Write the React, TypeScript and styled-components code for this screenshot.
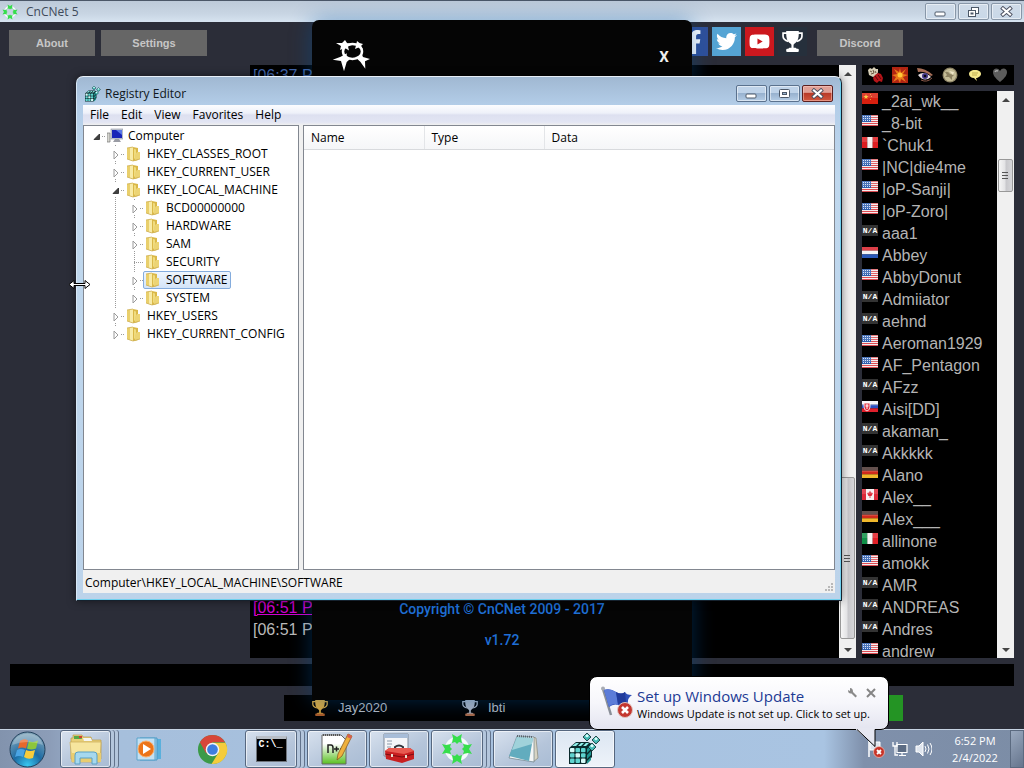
import React from "react";
import styled, { createGlobalStyle, css } from "styled-components";
import { FaFacebookF, FaTwitter, FaYoutube } from "react-icons/fa";

const segoe = `"Open Sans", "Noto Sans", sans-serif`;
const arial = `"Liberation Sans", Arial, sans-serif`;

const GlobalStyle = createGlobalStyle`
  *, *::before, *::after { box-sizing: border-box; }
  html, body { margin: 0; height: 100%; overflow: hidden; background: #2b2d38; }
  #root { height: 100%; }
  button, input { font: inherit; color: inherit; margin: 0; padding: 0; border: 0; border-radius: 0; background: none; }
  ul, h1, h2, p { margin: 0; padding: 0; list-style: none; }
  h1, h2 { font-weight: normal; }
  svg { display: block; flex: none; }
`;

const Desktop = styled.div`
  position: relative;
  height: 100%;
  display: flex;
  flex-direction: column;
  overflow: hidden;
  font: 12px/18px ${segoe};
  color: #000;
`;

/* ---------- shared window parts ---------- */

const Controls = styled.div`
  display: flex;
  gap: 2px;
  margin-left: auto;
`;

const ControlButton = styled.button<{ $tone?: "close" | "idle" }>`
  width: 31px;
  height: 17px;
  display: flex;
  align-items: center;
  justify-content: center;
  border: 1px solid #5b728e;
  border-radius: 2px;
  box-shadow: inset 0 0 0 1px rgba(255, 255, 255, 0.5);
  background: linear-gradient(#bfd3e9 0 45%, #98b2cf 50%, #b5cde6);
  ${(p) =>
    p.$tone === "close" &&
    css`
      border-color: #5a2020;
      background: linear-gradient(#e0a096 0 42%, #b93a28 50%, #d2583f);
      box-shadow: inset 0 0 0 1px rgba(255, 210, 200, 0.5);
    `}
  ${(p) =>
    p.$tone === "idle" &&
    css`
      border-color: #8897a8;
      background: linear-gradient(#cfdbe8, #c9d8e8);
    `}
`;

const MinGlyph = () => (
  <svg width="13" height="11" viewBox="0 0 13 11">
    <rect x="1" y="6" width="10" height="4" rx="1" fill="#fff" stroke="#4c5868" />
  </svg>
);
const MaxGlyph = () => (
  <svg width="13" height="11" viewBox="0 0 13 11">
    <rect x="1.5" y="1.5" width="10" height="8" rx="1" fill="#fff" stroke="#4c5868" />
    <rect x="4.5" y="4.5" width="4" height="2" fill="#9ab4d0" stroke="#4c5868" />
  </svg>
);
const RestoreGlyph = () => (
  <svg width="13" height="12" viewBox="0 0 13 12">
    <rect x="4.500" y="1.500" width="7" height="6" fill="#fff" stroke="#4c5868" />
    <rect x="1.500" y="4.500" width="7" height="6" fill="#fff" stroke="#4c5868" />
    <rect x="4" y="7" width="2" height="1" fill="#c9d8e8" stroke="#4c5868" />
  </svg>
);
const CloseGlyph = () => (
  <svg width="13" height="11" viewBox="0 0 13 11">
    <path d="M3 2.500 10 8.500M10 2.500 3 8.500" stroke="#4c5060" strokeWidth="4" strokeLinecap="square" />
    <path d="M3 2.500 10 8.500M10 2.500 3 8.500" stroke="#fff" strokeWidth="2.200" strokeLinecap="square" />
  </svg>
);

/* ---------- scroll bars ---------- */

const ScrollColumn = styled.div`
  width: 17px;
  flex: none;
  display: flex;
  flex-direction: column;
  align-items: center;
  background: #f0f0f0;
`;
const ScrollArrow = styled.button`
  width: 17px;
  height: 17px;
  display: flex;
  align-items: center;
  justify-content: center;
`;
const ScrollSpace = styled.div<{ $grow: number }>`
  flex: ${(p) => p.$grow} 0 0;
`;
const ScrollThumb = styled.div<{ $size: number }>`
  width: 15px;
  height: ${(p) => p.$size}px;
  border: 1px solid #989898;
  border-radius: 2px;
  background: linear-gradient(90deg, #f6f6f6, #e3e3e5 45%, #c8c8cc 55%, #d6d6d9);
  display: flex;
  align-items: center;
  justify-content: center;
`;

function ScrollBar({ before, after, size }: { before: number; after: number; size: number }) {
  return (
    <ScrollColumn>
      <ScrollArrow aria-label="Scroll up">
        <svg width="8" height="4" viewBox="0 0 8 4"><path d="M0 4 4 0l4 4z" fill="#444" /></svg>
      </ScrollArrow>
      <ScrollSpace $grow={before} />
      <ScrollThumb $size={size}>
        <svg width="7" height="9" viewBox="0 0 7 9"><path d="M0 1.500h6M0 4.500h6M0 7.500h6" stroke="#555" /></svg>
      </ScrollThumb>
      <ScrollSpace $grow={after} />
      <ScrollArrow aria-label="Scroll down">
        <svg width="8" height="4" viewBox="0 0 8 4"><path d="M0 0h8L4 4z" fill="#444" /></svg>
      </ScrollArrow>
    </ScrollColumn>
  );
}

/* ---------- CnCNet client ---------- */

const Client = styled.main`
  flex: 1;
  min-height: 0;
  display: flex;
  flex-direction: column;
  background: #2b2d38;
  font-family: ${arial};
`;
const ClientTitle = styled.header`
  height: 22px;
  flex: none;
  display: flex;
  align-items: center;
  gap: 8px;
  padding: 0 2px 0 2px;
  border-top: 1px solid #4b5768;
  background: linear-gradient(#bdcad9, #c8d5e3 60%, #d6e3f0);
  color: #3f4a5a;
  font: 12px/20px ${segoe};
`;
const Toolbar = styled.nav`
  height: 43px;
  flex: none;
  display: flex;
  align-items: flex-start;
  gap: 6px;
  padding: 8px 121px 0 9px;
`;
const GreyButton = styled.button<{ $wide?: boolean }>`
  width: ${(p) => (p.$wide ? 106 : 86)}px;
  height: 26px;
  background: #666;
  color: #c6c6c6;
  font: bold 11px/26px ${arial};
`;
const Social = styled.div`
  display: flex;
  gap: 4px;
  margin: -3px 4px 0 auto;
`;
const SocialLink = styled.a<{ $bg: string }>`
  width: 29px;
  height: 29px;
  display: flex;
  align-items: center;
  justify-content: center;
  background: ${(p) => p.$bg};
  color: #fff;
`;
const Body = styled.div`
  flex: 1;
  min-height: 0;
  display: flex;
  gap: 6px;
  padding: 0 10px 0 250px;
`;
const Chat = styled.section`
  flex: 1;
  min-width: 0;
  display: flex;
  background: #000;
`;
const ChatLog = styled.div`
  flex: 1;
  min-width: 0;
  display: flex;
  flex-direction: column;
  justify-content: flex-end;
  padding: 0 3px 17px;
  font-size: 16px;
  line-height: 22px;
`;
const ChatLine = styled.p<{ $kind?: "private" | "old" }>`
  color: #b9b9b9;
  white-space: nowrap;
  ${(p) => p.$kind === "private" && css`color: #d000d0; text-decoration: underline;`}
  ${(p) => p.$kind === "old" && css`color: #4468ae; margin-bottom: auto;`}
`;
const Side = styled.aside`
  width: 152px;
  flex: none;
  display: flex;
  flex-direction: column;
  gap: 6px;
`;
const GameStrip = styled.div`
  height: 20px;
  flex: none;
  display: flex;
  align-items: center;
  justify-content: space-between;
  padding: 0 6px 0 5px;
  background: #000;
`;
const Roster = styled.div`
  flex: 1;
  min-height: 0;
  display: flex;
  background: #000;
`;
const Names = styled.ul`
  flex: 1;
  min-width: 0;
  overflow: hidden;
`;
const Player = styled.li`
  height: 22px;
  display: flex;
  align-items: flex-start;
  gap: 4px;
  color: #b4b4b4;
  font-size: 16px;
  line-height: 22px;
  white-space: nowrap;
`;
const FlagBox = styled.span`
  width: 16px;
  height: 11px;
  flex: none;
  margin-top: 2px;
`;
const NoFlag = styled(FlagBox)`
  background: #333;
  color: #fff;
  font: bold 8px/11px "Liberation Mono", monospace;
  text-align: center;
`;
const Footer = styled.div`
  flex: none;
  display: flex;
  flex-direction: column;
  gap: 9px;
  padding: 6px 10px 8px;
`;
const MessageInput = styled.input`
  width: 100%;
  height: 22px;
  padding: 0 6px;
  background: #000;
  color: #b9b9b9;
  outline: 0;
`;
const Ladder = styled.div`
  height: 26px;
  display: flex;
  margin: 0 111px 0 274px;
  background: #000;
  padding-left: 28px;
`;
const Ranked = styled.div`
  width: 150px;
  display: flex;
  align-items: center;
  gap: 10px;
  color: #b4bac2;
  font-size: 13px;
`;
const HostButton = styled.button`
  width: 86px;
  margin-left: auto;
  background: #249424;
`;

const CncLogo = ({ size = 16 }: { size?: number }) => (
  <svg width={size} height={size} viewBox="0 0 32 32">
    <circle cx="16" cy="16" r="10.500" fill="none" stroke="#f6fafc" strokeWidth="3.500" strokeDasharray="9 7.490" strokeDashoffset="-3.700" />
    {[0, 90, 180, 270].map((a) => (
      <path key={a} transform={`rotate(${a} 16 16)`} d="M11 1l5 3 5-3-1 4 1 5-3-1-2 2-2-2-3 1 1-5z" fill="#36de4c" />
    ))}
  </svg>
);
const Cup = ({ c, foot, size = 18 }: { c: string; foot: string; size?: number }) => (
  <svg width={size} height={size} viewBox="0 0 20 20">
    <path d="M5 2H1v3c0 3 2 4 5 5M15 2h4v3c0 3-2 4-5 5" fill="none" stroke={c} strokeWidth="1.600" />
    <path d="M4 0h12v2c0 5-1 8-4 10l-1 1v3h2l2 2H5l2-2h2v-3l-1-1C5 10 4 7 4 2z" fill={c} />
    <rect x="4" y="17" width="12" height="3" rx="1" fill={foot} />
  </svg>
);

const usStars = [1, 3, 5, 7].flatMap((x) => [1, 3, 5].map((y) => [x, y]));
function Flag({ code }: { code: string }) {
  if (code === "na") return <NoFlag>N/A</NoFlag>;
  const stripes = (cols: string[], vertical = false) =>
    cols.map((c, i) =>
      vertical ? (
        <rect key={i} x={(16 / cols.length) * i} width={16 / cols.length + 0.1} height="11" fill={c} />
      ) : (
        <rect key={i} y={(11 / cols.length) * i} width="16" height={11 / cols.length + 0.1} fill={c} />
      )
    );
  return (
    <FlagBox>
      <svg width="16" height="11" viewBox="0 0 16 11">
        {code === "us" && (
          <>
            {stripes(["#e0686c", "#f4ecee", "#dc4c52", "#f4ecee", "#dc4c52", "#f4ecee", "#dc4c52", "#f4ecee", "#dc4c52", "#f4ecee", "#dc4c52"])}
            <rect width="9" height="7" fill="#2f5fae" />
            {usStars.map(([x, y]) => <rect key={`${x}${y}`} x={x} y={y} width="1" height="1" fill="#d4e0f6" />)}
          </>
        )}
        {code === "cn" && (
          <>
            <rect width="16" height="11" fill="#d8200f" />
            <path d="M4 1l.7 2h2L5 4.200l.6 2L4 5 2.400 6.200l.6-2L1.300 3h2z" fill="#f7c52c" />
            <path d="M8 1h1v1H8zM9 3h1v1H9zM8 6h1v1H8z" fill="#e8972c" />
          </>
        )}
        {code === "pe" && stripes(["#dc1c20", "#f6eeee", "#dc1c20"], true)}
        {code === "it" && stripes(["#109048", "#f4f4f4", "#e02028"], true)}
        {code === "nl" && stripes(["#d8202a", "#f4f4f6", "#2a58b8"])}
        {code === "de" && stripes(["#4a3430", "#d02a1c", "#f0b82c"])}
        {code === "sk" && (
          <>
            {stripes(["#f2f2f6", "#2a4fc0", "#e0202c"])}
            <path d="M2 2h6v4q0 3-3 4-3-1-3-4z" fill="#e02a3c" stroke="#fff" strokeWidth=".8" />
            <path d="M5 3v5M3.500 5h3" stroke="#fff" />
          </>
        )}
        {code === "ca" && (
          <>
            <rect width="16" height="11" fill="#f6f0f0" />
            <path d="M0 0h4v11H0zM12 0h4v11h-4z" fill="#dc2a38" />
            <path d="M8 1.500l1 2 2 .5-1.500 3H8.400V9h-.8V7H6.500L5 4l2-.5z" fill="#dc2a38" />
          </>
        )}
        <path d="M0 0h16v5H0z" fill="#fff" opacity=".14" />
      </svg>
    </FlagBox>
  );
}

const players: [string, string][] = [
  ["cn", "_2ai_wk__"], ["us", "_8-bit"], ["pe", "`Chuk1"], ["us", "|NC|die4me"], ["us", "|oP-Sanji|"],
  ["us", "|oP-Zoro|"], ["na", "aaa1"], ["nl", "Abbey"], ["us", "AbbyDonut"], ["na", "Admiiator"],
  ["na", "aehnd"], ["us", "Aeroman1929"], ["us", "AF_Pentagon"], ["na", "AFzz"], ["sk", "Aisi[DD]"],
  ["na", "akaman_"], ["na", "Akkkkk"], ["de", "Alano"], ["ca", "Alex__"], ["de", "Alex___"],
  ["it", "allinone"], ["us", "amokk"], ["na", "AMR"], ["na", "ANDREAS"], ["na", "Andres"], ["us", "andrew"],
];

const GameIcons = () => (
  <>
    <svg width="16" height="16" viewBox="0 0 16 16">
      <path d="M1 3l2-2 2 1 2-2 2 2 2 0 0 3-1 3-4 2-4-2z" fill="#d8d0b8" />
      <path d="M3 4l2 1M6 3l1 3M4 7l3-1M8 4l1 2" stroke="#6a5640" />
      <path d="M6 11l2-3 3-2 3 1 2 4-1 4-3-1-2 2-3-2z" fill="#b41418" />
      <path d="M8 9l3 4M11 8l3 4" stroke="#5c0608" />
    </svg>
    <svg width="16" height="16" viewBox="0 0 16 16">
      <rect width="16" height="16" fill="#b02412" />
      <path d="M8 1l1 5 5-4-3 5 5 1-5 2 3 5-5-3-1 4-2-4-5 3 3-5-4-2 5-1-3-5 5 3z" fill="#e87818" />
      <circle cx="8" cy="8" r="2.500" fill="#ffc838" />
    </svg>
    <svg width="16" height="16" viewBox="0 0 16 16">
      <path d="M0 1q8 0 16 7l-2 1Q8 4 1 5z" fill="#a86f58" />
      <path d="M1 8q6-5 13 2-7 6-13-2z" fill="#e8e0e4" />
      <circle cx="8" cy="9" r="3" fill="#453a88" /><circle cx="8" cy="9" r="1.300" fill="#060610" />
      <path d="M4 13q6 3 11-2" stroke="#8a5848" fill="none" />
    </svg>
    <svg width="16" height="16" viewBox="0 0 16 16">
      <circle cx="8" cy="8" r="7.500" fill="#8d8466" />
      <circle cx="8" cy="8" r="6.300" fill="#c4bc96" />
      <path d="M3 5q3-1 5 2l4 1-2 2 0 3-3-3-4 0 2-2z" fill="#8a8060" />
      <path d="M7 4l5 1-1 3z" fill="#eee6c8" />
    </svg>
    <svg width="16" height="16" viewBox="0 0 16 16">
      <path d="M8 3c4 0 6 2 6 4s-3 4-5 4l1 3-3-3c-3 0-5-2-5-4s2-4 6-4z" fill="#f4e88c" />
      <path d="M5 6h6M5 8h5" stroke="#c0b050" />
    </svg>
    <svg width="16" height="16" viewBox="0 0 16 16">
      <path d="M8 15C3 11 1 8 1 5c0-4 5-5 7-1 2-4 7-3 7 1 0 3-2 6-7 10z" fill="#5c5c5c" />
      <path d="M3 5q1-2 3-1" stroke="#aaa" strokeWidth="1.500" fill="none" />
    </svg>
  </>
);

/* ---------- About dialog ---------- */

const AboutDialog = styled.section`
  position: absolute;
  top: 20px;
  bottom: 68px;
  left: 312px;
  width: 380px;
  display: flex;
  flex-direction: column;
  justify-content: space-between;
  padding: 20px 20px 52px;
  border-radius: 7px 7px 0 0;
  background: #050505;
  box-shadow: 0 0 22px rgba(0, 84, 160, 0.45);
`;
const AboutHead = styled.div`
  display: flex;
  justify-content: space-between;
  align-items: center;
`;
const AboutClose = styled.button`
  width: 16px;
  padding-top: 2px;
  color: #eee;
  font: bold 15px/20px Roboto, sans-serif;
`;
const AboutFoot = styled.div`
  text-align: center;
  color: #1f6fd6;
  font: 500 14px/16px Roboto, sans-serif;
  display: flex;
  flex-direction: column;
  gap: 15px;
`;
const StarLogo = () => (
  <svg width="39" height="32" viewBox="0 0 39 32">
    <ellipse cx="20.500" cy="11.500" rx="9.500" ry="7.500" fill="none" stroke="#fff" strokeWidth="2.500" />
    <g fill="#fff">
      <path d="M13 0l2 3 5 1.500-4 2 1 4-4-2.500-5 2 1-4-5-3 6 0z" />
      <path d="M25 1l2.500 2 3.500 1-2 2 2 3.500-4.500-2-3.500 1.500 1-3.500z" />
      <path d="M.7 19.700l8-3 6-3.500 0 4 4.500.800-4.500 4L12 31.300 9 21z" />
      <path d="M23 17l4.500-.500 2-3 1.500 3.500 7 2-5 2.300.3 7.500-5-7z" />
    </g>
  </svg>
);

/* ---------- Registry Editor ---------- */

const RegWindow = styled.section`
  position: absolute;
  top: 76px;
  right: 182px;
  bottom: 167px;
  left: 76px;
  display: flex;
  flex-direction: column;
  padding: 0 6px 7px;
  border: 1px solid #16222e;
  border-top-color: #e8f0f8;
  border-left-color: #d8e8f6;
  border-radius: 7px 7px 0 0;
  box-shadow: inset -1px -1px 0 #6fd0ee, 0 0 8px rgba(0, 0, 0, 0.5);
  background: linear-gradient(#a0b8d2, #b3cde8 28px, #c0d8ee 100px, #bcd3ea);
`;
const RegTitle = styled.header`
  height: 28px;
  flex: none;
  display: flex;
  align-items: center;
  gap: 4px;
  padding: 5px 2px 0;
`;
const RegHeading = styled.h1`
  font-size: 12px;
  line-height: 16px;
  color: #101820;
`;
const RegInner = styled.div`
  flex: 1;
  min-height: 0;
  display: flex;
  flex-direction: column;
  background: #f0f0f0;
`;
const MenuBar = styled.nav`
  height: 20px;
  flex: none;
  display: flex;
  gap: 12px;
  padding: 0 7px;
  background: linear-gradient(#fcfdff, #eef1f9 40%, #dde0f0 50%, #e2e5f3 85%, #f0f0f0);
`;
const MenuItem = styled.button`
  line-height: 20px;
`;
const Panes = styled.div`
  flex: 1;
  min-height: 0;
  display: flex;
  gap: 4px;
`;
const pane = css`
  background: #fff;
  border: 1px solid #828790;
`;
const TreePane = styled.ul`
  ${pane}
  width: 216px;
  flex: none;
  padding: 1px 0 0 4px;
`;
const ListPane = styled.div`
  ${pane}
  flex: 1;
`;
const Grid = styled.table`
  width: 100%;
  border-collapse: collapse;
  table-layout: fixed;
  background: linear-gradient(#fff, #f5f6f8);
`;
const Column = styled.th<{ $w?: number }>`
  width: ${(p) => (p.$w ? `${p.$w}px` : "auto")};
  height: 23px;
  padding: 2px 7px 0;
  text-align: left;
  font-weight: normal;
  border-right: 1px solid #e3e5e8;
  border-bottom: 1px solid #d8dadd;
  &:last-child { border-right: 0; }
`;
const StatusBar = styled.footer`
  height: 23px;
  flex: none;
  display: flex;
  align-items: center;
  justify-content: space-between;
  padding: 2px 0 0 2px;
`;
const TreeRow = styled.li`
  height: 18px;
  display: flex;
  white-space: nowrap;
`;
const dots = "repeating-linear-gradient(#9a9a9a 0 1px, transparent 1px 2px)";
const dotsAcross = "repeating-linear-gradient(90deg, #9a9a9a 0 1px, transparent 1px 2px)";
const Guide = styled.span<{ $line: boolean }>`
  width: 19px;
  background: ${(p) => (p.$line ? dots : "none")} 8px 0 / 1px 18px no-repeat;
`;
const Branch = styled.span<{ $root: boolean; $last: boolean }>`
  width: 17px;
  display: flex;
  align-items: center;
  background: ${dots} 8px 0 / 1px ${(p) => (p.$root ? 0 : p.$last ? 9 : 18)}px no-repeat,
    ${dotsAcross} 8px 9px / 9px 1px no-repeat;
`;
const Expander = styled.button`
  width: 9px;
  height: 14px;
  margin-left: 5px;
  display: flex;
  align-items: center;
  background: #fff;
`;
const Node = styled.span<{ $selected?: boolean }>`
  display: flex;
  align-items: center;
  gap: 5px;
  padding: 0 3px 0 1px;
  border: 1px solid ${(p) => (p.$selected ? "#84acdd" : "transparent")};
  border-radius: 2px;
  background: ${(p) => (p.$selected ? "linear-gradient(#f0f6fd, #d3e4f8)" : "none")};
`;

const FolderIcon = () => (
  <svg width="16" height="16" viewBox="0 0 16 16">
    <path d="M1 2l6-1v14l-6-2z" fill="#e9cf6c" />
    <path d="M4 1l3 0v14l-3-1z" fill="#f8eba8" />
    <path d="M7 1l5 1v12l-5 1z" fill="#dab848" />
    <path d="M8 3l2 .5v8L8 13z" fill="#f0dc80" />
    <path d="M11 6h3v7l-5 2V9z" fill="#ecd474" />
    <path d="M1 2l6-1M1 13l6 2 7-2" fill="none" stroke="#c8a848" strokeWidth=".7" />
  </svg>
);
const ComputerIcon = () => (
  <svg width="16" height="16" viewBox="0 0 16 16">
    <path d="M0 5h3v9H0z" fill="#d6d6d0" stroke="#777" strokeWidth=".7" />
    <rect x="4" y="1" width="12" height="10" fill="#c9ccd4" stroke="#8890a0" strokeWidth=".6" />
    <rect x="5" y="2" width="10" height="8" fill="#1824b8" />
    <path d="M9 2h6v5z" fill="#5a78e8" />
    <path d="M8 11h4l2 3H6z" fill="#9a9ca4" />
  </svg>
);
const RegIcon = ({ size = 16 }: { size?: number }) => (
  <svg width={size} height={size} viewBox="0 0 32 32">
    <path d="M0 15l7-6 12 0 4 2v13l-6 7L0 31z" fill="#0a2a2c" />
    {[0, 1, 2].flatMap((r) =>
      [0, 1, 2].map((c) => (
        <rect key={`${r}${c}`} x={1 + c * 5.5} y={15 + r * 5.3} width="4.500" height="4.300" rx="1" fill={c === r ? "#d4fbf8" : "#5fd4cf"} />
      ))
    )}
    <path d="M3 13l4-3h3l-3 3zM9 13l3-3h3l-3 3zM14 13l3-3h3l-3 3z" fill="#8ff0ea" />
    <path d="M18 16l4-4v4l-4 4zM18 22l4-4v4l-4 4zM18 28l4-4v3l-4 4z" fill="#1f9490" />
    {[[18, 4], [27, 7], [23, 14]].map(([x, y]) => (
      <g key={x} stroke="#0a2a2c" strokeWidth=".8">
        <path d={`M${x - 4} ${y}l4-4 4 4-4 4z`} fill="#44b8b2" />
        <path d={`M${x - 2} ${y - 1}l2-2 2 2-2 1.500z`} fill="#d8fffc" stroke="none" />
      </g>
    ))}
  </svg>
);

type Key = { name: string; level: number; state: "open" | "shut" | "leaf"; last?: boolean; selected?: boolean };
const keys: Key[] = [
  { name: "Computer", level: 0, state: "open" },
  { name: "HKEY_CLASSES_ROOT", level: 1, state: "shut" },
  { name: "HKEY_CURRENT_USER", level: 1, state: "shut" },
  { name: "HKEY_LOCAL_MACHINE", level: 1, state: "open" },
  { name: "BCD00000000", level: 2, state: "shut" },
  { name: "HARDWARE", level: 2, state: "shut" },
  { name: "SAM", level: 2, state: "shut" },
  { name: "SECURITY", level: 2, state: "leaf" },
  { name: "SOFTWARE", level: 2, state: "shut", selected: true },
  { name: "SYSTEM", level: 2, state: "shut", last: true },
  { name: "HKEY_USERS", level: 1, state: "shut" },
  { name: "HKEY_CURRENT_CONFIG", level: 1, state: "shut", last: true },
];

function TreeKey({ item }: { item: Key }) {
  return (
    <TreeRow>
      {item.level > 0 && <Guide $line={false} />}
      {item.level > 1 && <Guide $line />}
      <Branch $root={item.level === 0} $last={!!item.last}>
        {item.state !== "leaf" && (
          <Expander aria-label={`Toggle ${item.name}`}>
            <svg width="8" height="10" viewBox="0 0 8 10">
              {item.state === "open" ? (
                <path d="M6.500 3v5.500H1z" fill="#404040" stroke="#222" strokeWidth=".8" />
              ) : (
                <path d="M2 2v8L6 6z" fill="#fff" stroke="#9a9a9a" />
              )}
            </svg>
          </Expander>
        )}
      </Branch>
      <Node $selected={item.selected}>
        {item.level === 0 ? <ComputerIcon /> : <FolderIcon />}
        {item.name}
      </Node>
    </TreeRow>
  );
}

const ResizeCursor = styled.svg`
  position: absolute;
  top: 279px;
  left: 68px;
`;

/* ---------- Taskbar ---------- */

const Taskbar = styled.footer`
  height: 39px;
  flex: none;
  display: flex;
  align-items: stretch;
  gap: 2px;
  padding-left: 9px;
  border-top: 1px solid #c6d3e2;
  background: linear-gradient(90deg, #8293ad, #8c9db8 50px, #a6bfdc 120px, #a9c4e2 calc(100% - 200px), #7f90ab calc(100% - 160px), #7c8da6);
`;
const StartButton = styled.button`
  width: 37px;
  margin-right: 12px;
`;
const Task = styled.button<{ $w: number; $look?: "plain" | "active"; $stack?: boolean }>`
  width: ${(p) => p.$w}px;
  display: flex;
  align-items: center;
  justify-content: center;
  border: 1px solid #56677f;
  border-radius: 3px;
  margin-right: ${(p) => (p.$stack ? 8 : 0)}px;
  box-shadow: inset 0 0 0 1px rgba(255, 255, 255, 0.6)${(p) => p.$stack && ", 3px 0 0 #b4c6dc, 4px 0 0 #62738c, 7px 0 0 #b4c6dc, 8px 0 0 #62738c"};
  background: linear-gradient(150deg, #d7e1ee, #b5c5da 60%, #a9bcd4);
  ${(p) => p.$look === "plain" && css`border-color: transparent; background: none; box-shadow: none;`}
  ${(p) => p.$look === "active" && css`background: linear-gradient(#dce6f2, #eef3f9);`}
`;
const Tray = styled.div`
  display: flex;
  align-items: center;
  gap: 7px;
  margin-left: auto;
  padding-right: 8px;
`;
const Clock = styled.div`
  width: 50px;
  margin-left: 11px;
  color: #fff;
  font-size: 11px;
  line-height: 17px;
  text-align: center;
  white-space: nowrap;
`;
const ShowDesktop = styled.button`
  width: 14px;
  border: 1px solid #5b6a80;
  background: linear-gradient(135deg, #9aa9bf, #66758d);
`;

const StartOrb = () => (
  <svg width="37" height="37" viewBox="0 0 37 37">
    <defs>
      <radialGradient id="orb" cx=".5" cy=".95" r=".9">
        <stop offset="0" stopColor="#38c8f0" /><stop offset=".45" stopColor="#1c6ba4" /><stop offset="1" stopColor="#7fa3b8" />
      </radialGradient>
    </defs>
    <circle cx="18.500" cy="18.500" r="17.500" fill="url(#orb)" stroke="#22405c" />
    <path d="M11 10q4-3 8-.5l-2 8q-4-2-8 0z" fill="#e8682c" />
    <path d="M20 10q4 2 9-.5l-2 8q-5 2-9 0z" fill="#8cc63c" />
    <path d="M8 19q4-2 8 0l-2 7q-4-2-8 0z" fill="#4aa4e4" />
    <path d="M17 19q4 2 9 0l-2 8q-5 2-9-1z" fill="#f8cc3c" />
    <path d="M3 14Q6 3 18.500 2.500 31 3 34 14 18 8 3 14z" fill="#fff" opacity=".25" />
  </svg>
);
const ExplorerIcon = () => (
  <svg width="34" height="32" viewBox="0 0 34 32">
    <path d="M2 5h2V2h9l1 2h8l1 3h9v19H2z" fill="#e8cf78" stroke="#b99b48" strokeWidth=".7" />
    <path d="M5 3h7l1 3H5z" fill="#58a848" /><path d="M14 5h8l1 3h-8z" fill="#f4f4f0" /><path d="M10 3h3v2h-3z" fill="#d04030" />
    <path d="M1 9h31l-1 20H3z" fill="#f6e59e" stroke="#c8ab58" strokeWidth=".7" />
    <path d="M2 20h30v9H3z" fill="#e9cd70" />
    <path d="M6 31V22q0-3 3-3h16q3 0 3 3v9h-5v-6H11v6z" fill="#a6d8ee" stroke="#5aa0c4" />
  </svg>
);
const MediaIcon = () => (
  <svg width="28" height="26" viewBox="0 0 28 26">
    <path d="M8 3h17v20H8z" fill="#5ab0dc" /><path d="M4 2h17v22H4z" fill="#9fd0ea" stroke="#4a98c4" /><path d="M1 2h18v22H1z" fill="#c4e0f2" stroke="#5aa4cc" />
    <circle cx="10" cy="13" r="8" fill="#ec7418" stroke="#f8b070" />
    <path d="M7 8l8 5-8 5z" fill="#fff" />
  </svg>
);
const ChromeIcon = () => (
  <svg width="31" height="31" viewBox="0 0 32 32">
    <circle cx="16" cy="16" r="15" fill="#3c9a48" />
    <path d="M3 8.500A15 15 0 0 1 29 8.500H16L9.500 20z" fill="#d8473a" />
    <path d="M16 9h13.400A15 15 0 0 1 15 31l7-11.500z" fill="#f4cc3c" />
    <circle cx="16" cy="16" r="7" fill="#f4f4f4" /><circle cx="16" cy="16" r="5.500" fill="#3f7ee0" />
  </svg>
);
const Console = styled.span`
  width: 31px;
  height: 26px;
  border: 1px solid #70757c;
  border-top: 3px solid #b8bec6;
  background: #000;
  color: #fff;
  font: bold 10px/12px "Liberation Mono", monospace;
  text-align: left;
  padding-left: 2px;
`;
const NotepadPlusIcon = () => (
  <svg width="32" height="32" viewBox="0 0 32 32">
    <defs><linearGradient id="npp" x2="0" y2="1"><stop offset=".3" stopColor="#fff" /><stop offset="1" stopColor="#58c020" /></linearGradient></defs>
    <path d="M1 2h19l5 5v24H1z" fill="url(#npp)" stroke="#666" />
    <path d="M2 2h18" stroke="#555" strokeWidth="2" strokeDasharray="1 1" />
    <path d="M7 20v-8h3q2 0 2 3v5M13 16h5M15.500 13.500v5M19 16h5M21.500 13.500v5" fill="none" stroke="#222" strokeWidth="1.500" />
    <path d="M27 1l4 2-10 20-5 4 1-6z" fill="#eeb03c" stroke="#8a5a20" strokeWidth=".8" />
    <path d="M27 1l4 2-1 3-4-2z" fill="#d86050" />
  </svg>
);
const ToolboxIcon = () => (
  <svg width="32" height="32" viewBox="0 0 32 32">
    <path d="M1 1h24v22H1z" fill="#f4f5f8" stroke="#7c8898" /><path d="M1 1h24v4H1z" fill="#a8bdd8" />
    <path d="M4 8h5M4 11h5M4 14h4" stroke="#8a98a8" />
    <path d="M12 16v-2q4-3 8 0v2" fill="none" stroke="#30343c" strokeWidth="2" />
    <path d="M2 18l4-3h21l4 3v8l-12 4-16-4z" fill="#c81f20" /><path d="M2 18l4-3h21l4 3-10 3z" fill="#e85a50" />
    <path d="M2 21l17 3 12-3" stroke="#7a0c10" fill="none" /><path d="M8 21h2v3H8zM22 22h2v3h-2z" fill="#e8e0d0" />
  </svg>
);
const NotepadIcon = () => (
  <svg width="32" height="32" viewBox="0 0 32 32">
    <path d="M26 4l3 1 2 20-5 4z" fill="#d8d4c4" stroke="#8a8878" strokeWidth=".7" />
    <path d="M10 3l17 1 0 25-25-4z" fill="#f4f6f6" stroke="#6a8088" strokeWidth=".7" />
    <path d="M10 4l16 1-4 23-20-5z" fill="#62acbe" /><path d="M10 4l16 1-1 6L5 17z" fill="#a0d2da" />
    <path d="M10 3l16 1" stroke="#58646c" strokeWidth="2" strokeDasharray="1 1" />
  </svg>
);
const TrayIcons = () => (
  <>
    <svg width="18" height="18" viewBox="0 0 18 18">
      <path d="M2 1v16" stroke="#fff" strokeWidth="1.500" /><path d="M3 2h10v8H3z" fill="#dfe5ee" stroke="#fff" />
      <circle cx="12" cy="12" r="5.500" fill="#c83428" stroke="#f0c0b8" strokeWidth=".7" />
      <path d="M10 10l4 4M14 10l-4 4" stroke="#fff" strokeWidth="1.800" />
    </svg>
    <svg width="16" height="16" viewBox="0 0 16 16">
      <path d="M5 3.500h10v8H5z" fill="#5c6c84" stroke="#fff" strokeWidth="1.200" /><path d="M7 14.500h7M10 12v2" stroke="#fff" strokeWidth="1.200" />
      <path d="M1 1v4h4V1M3 5v9h3" fill="none" stroke="#fff" strokeWidth="1.300" />
    </svg>
    <svg width="17" height="16" viewBox="0 0 17 16">
      <path d="M1 5h3l4-4v14l-4-4H1z" fill="#dfe5ee" stroke="#fff" />
      <path d="M10 5q2 3 0 6M12.500 3.500q3 4.500 0 9M15 2q4 6 0 12" fill="none" stroke="#fff" />
    </svg>
  </>
);

/* ---------- Notification balloon ---------- */

const Balloon = styled.section`
  position: absolute;
  right: 135px;
  bottom: 38px;
  width: 300px;
  height: 54px;
  display: flex;
  gap: 4px;
  padding: 9px 10px 0 11px;
  border: 1px solid #000;
  border-radius: 8px;
  background: linear-gradient(#fff, #f6f6fb 50%, #e4e5f0);
`;
const BalloonTail = styled.svg`
  position: absolute;
  top: 51px;
  right: 11px;
`;
const BalloonText = styled.div`
  flex: 1;
  min-width: 0;
  white-space: nowrap;
`;
const BalloonTitle = styled.h2`
  color: #1c3a94;
  font-size: 15px;
  line-height: 20px;
`;
const BalloonBody = styled.p`
  font-size: 11px;
  line-height: 16px;
`;
const BalloonTools = styled.div`
  position: absolute;
  top: 10px;
  right: 12px;
  display: flex;
  gap: 8px;
`;
const AlertFlag = () => (
  <svg width="32" height="32" viewBox="0 0 32 32">
    <path d="M2 3l8 26" stroke="#8a8f98" strokeWidth="2.500" /><circle cx="2" cy="2.500" r="2" fill="#a8acb4" />
    <path d="M3 4q6-2 12 2 6 3 9 0 1 3 7 3-5 3-4 9l-5 3q-8-5-14 0z" fill="#2f50b8" />
    <path d="M3 4q6-2 12 2l2 13q-5-3-9 2z" fill="#5c7cd8" />
    <path d="M15 6q5 3 9 0l1 10-8 2z" fill="#223c9c" />
    <circle cx="24" cy="24" r="7.500" fill="#c43830" stroke="#e0c4c0" />
    <path d="M21 21l6 6M27 21l-6 6" stroke="#fff" strokeWidth="2.600" />
  </svg>
);

export default function App() {
  return (
    <Desktop>
      <GlobalStyle />
      <Client>
        <ClientTitle>
          <CncLogo />
          CnCNet 5
          <Controls>
            <ControlButton $tone="idle" aria-label="Minimize"><MinGlyph /></ControlButton>
            <ControlButton $tone="idle" aria-label="Restore"><RestoreGlyph /></ControlButton>
            <ControlButton $tone="idle" aria-label="Close"><CloseGlyph /></ControlButton>
          </Controls>
        </ClientTitle>
        <Toolbar>
          <GreyButton>About</GreyButton>
          <GreyButton $wide>Settings</GreyButton>
          <Social>
            <SocialLink href="#facebook" aria-label="Facebook" $bg="#30509a"><FaFacebookF size={24} /></SocialLink>
            <SocialLink href="#twitter" aria-label="Twitter" $bg="#55a4d4"><FaTwitter size={21} /></SocialLink>
            <SocialLink href="#youtube" aria-label="YouTube" $bg="#cc181e"><FaYoutube size={21} /></SocialLink>
            <SocialLink href="#ladder" aria-label="Ladder" $bg="#26303c"><Cup c="#fff" foot="#fff" size={21} /></SocialLink>
          </Social>
          <GreyButton>Discord</GreyButton>
        </Toolbar>
        <Body>
          <Chat>
            <ChatLog>
              <ChatLine $kind="old">[06:37 P</ChatLine>
              <ChatLine $kind="private">[06:51 P</ChatLine>
              <ChatLine>[06:51 P</ChatLine>
            </ChatLog>
            <ScrollBar before={396} after={2} size={162} />
          </Chat>
          <Side>
            <GameStrip><GameIcons /></GameStrip>
            <Roster>
              <Names>
                {players.map(([flag, name]) => (
                  <Player key={name}><Flag code={flag} />{name}</Player>
                ))}
              </Names>
              <ScrollBar before={51} after={450} size={33} />
            </Roster>
          </Side>
        </Body>
        <Footer>
          <MessageInput aria-label="Message" />
          <Ladder>
            <Ranked><Cup c="#d8a840" foot="#a85a28" size={16} />Jay2020</Ranked>
            <Ranked><Cup c="#aab2c0" foot="#a86848" size={16} />Ibti</Ranked>
            <HostButton aria-label="Host game" />
          </Ladder>
        </Footer>
      </Client>

      <AboutDialog>
        <AboutHead>
          <StarLogo />
          <AboutClose aria-label="Close about">X</AboutClose>
        </AboutHead>
        <AboutFoot>
          <p>Copyright © CnCNet 2009 - 2017</p>
          <p>v1.72</p>
        </AboutFoot>
      </AboutDialog>

      <RegWindow>
        <RegTitle>
          <RegIcon />
          <RegHeading>Registry Editor</RegHeading>
          <Controls>
            <ControlButton aria-label="Minimize"><MinGlyph /></ControlButton>
            <ControlButton aria-label="Maximize"><MaxGlyph /></ControlButton>
            <ControlButton $tone="close" aria-label="Close"><CloseGlyph /></ControlButton>
          </Controls>
        </RegTitle>
        <RegInner>
          <MenuBar>
            {["File", "Edit", "View", "Favorites", "Help"].map((m) => <MenuItem key={m}>{m}</MenuItem>)}
          </MenuBar>
          <Panes>
            <TreePane>{keys.map((k) => <TreeKey key={k.name} item={k} />)}</TreePane>
            <ListPane>
              <Grid>
                <thead>
                  <tr><Column $w={120}>Name</Column><Column $w={120}>Type</Column><Column>Data</Column></tr>
                </thead>
              </Grid>
            </ListPane>
          </Panes>
          <StatusBar>
            Computer\HKEY_LOCAL_MACHINE\SOFTWARE
            <svg width="12" height="20" viewBox="0 2 12 20">
              <path d="M8 12h2v2H8zM5 15h2v2H5zM8 15h2v2H8zM2 18h2v2H2zM5 18h2v2H5zM8 18h2v2H8z" fill="#b8b8b8" />
            </svg>
          </StatusBar>
        </RegInner>
      </RegWindow>

      <ResizeCursor width="23" height="11" viewBox="0 0 23 11">
        <path d="M1 5.500l5-4v3h11v-3l5 4-5 4v-3H6v3z" fill="#fff" stroke="#000" />
      </ResizeCursor>

      <Taskbar>
        <StartButton aria-label="Start"><StartOrb /></StartButton>
        <Task $w={51} $stack aria-label="Explorer"><ExplorerIcon /></Task>
        <Task $w={58} $look="plain" aria-label="Media Player"><MediaIcon /></Task>
        <Task $w={62} $look="plain" aria-label="Chrome"><ChromeIcon /></Task>
        <Task $w={52} $stack aria-label="Command Prompt"><Console>C:\_</Console></Task>
        <Task $w={60} aria-label="Notepad++"><NotepadPlusIcon /></Task>
        <Task $w={60} aria-label="Toolbox"><ToolboxIcon /></Task>
        <Task $w={52} $stack aria-label="CnCNet"><CncLogo size={32} /></Task>
        <Task $w={60} aria-label="Notepad"><NotepadIcon /></Task>
        <Task $w={60} $look="active" aria-label="Registry Editor"><RegIcon size={32} /></Task>
        <Tray>
          <TrayIcons />
          <Clock>
            <div>6:52 PM</div>
            <div>2/4/2022</div>
          </Clock>
        </Tray>
        <ShowDesktop aria-label="Show desktop" />
      </Taskbar>

      <Balloon>
        <AlertFlag />
        <BalloonText>
          <BalloonTitle>Set up Windows Update</BalloonTitle>
          <BalloonBody>Windows Update is not set up. Click to set up.</BalloonBody>
        </BalloonText>
        <BalloonTools>
          <button aria-label="Options">
            <svg width="11" height="11" viewBox="0 0 11 11"><path d="M1 3l2 1V1q3 0 3 4l4 4-1.500 1.500-4-4Q1 7 1 3z" fill="#8a8a8a" /></svg>
          </button>
          <button aria-label="Dismiss">
            <svg width="10" height="10" viewBox="0 0 10 10"><path d="M1 1l8 8M9 1L1 9" stroke="#858585" strokeWidth="2" /></svg>
          </button>
        </BalloonTools>
        <BalloonTail width="22" height="21" viewBox="0 0 22 21">
          <path d="M1 0v1.500l19 17V0z" fill="#e6e7f1" />
          <path d="M2 1.500l18 17V1.500" fill="none" stroke="#000" />
        </BalloonTail>
      </Balloon>
    </Desktop>
  );
}
